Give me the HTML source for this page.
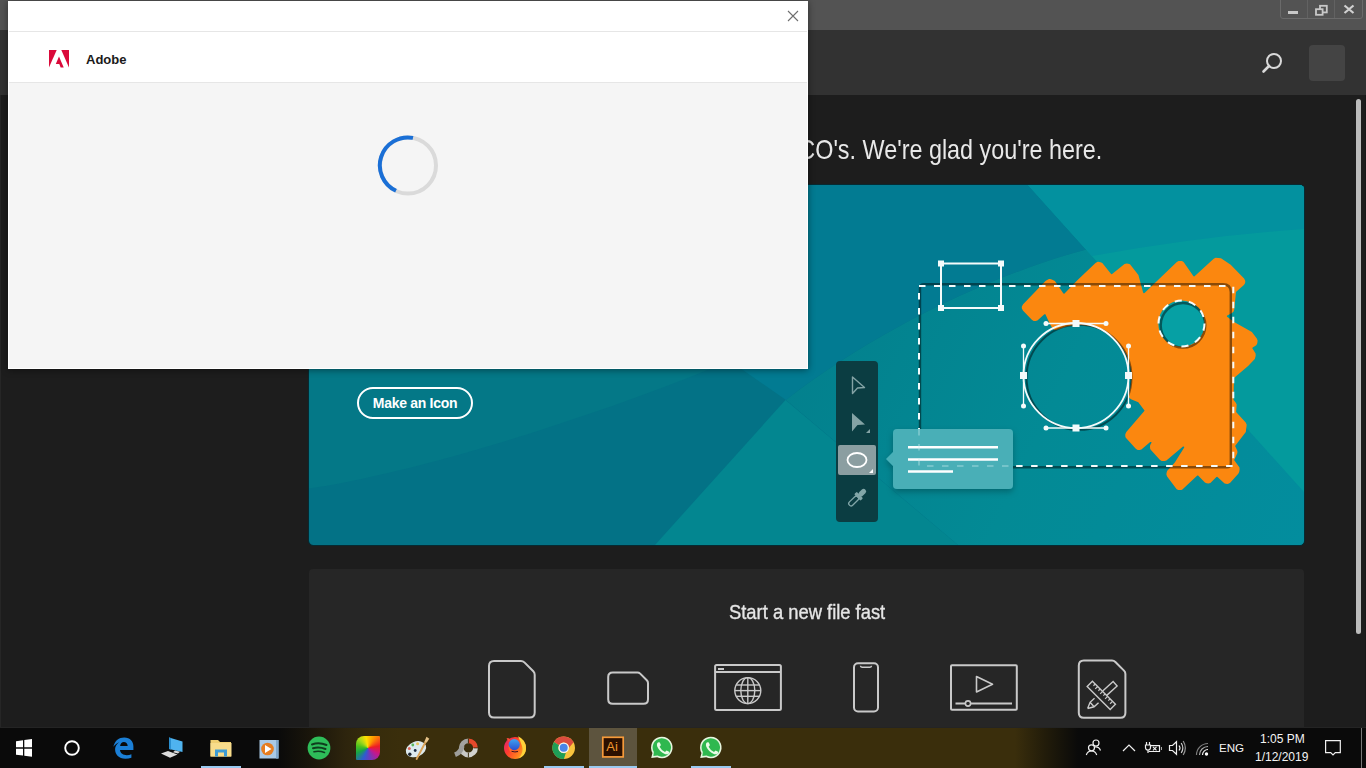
<!DOCTYPE html>
<html><head><meta charset="utf-8">
<style>
*{margin:0;padding:0;box-sizing:border-box}
html,body{width:1366px;height:768px;overflow:hidden;background:#1d1d1d;font-family:"Liberation Sans",sans-serif}
.a{position:absolute}
#titlebar{left:0;top:0;width:1366px;height:30px;background:#535353}
#header{left:0;top:30px;width:1366px;height:65px;background:#323232}
#content{left:0;top:95px;width:1366px;height:633px;background:#1d1d1d;border-left:1px solid #262626;border-right:1px solid #181818}
#welcome{right:264px;top:133.5px;font-size:27.5px;line-height:32px;color:#e8e8e8;white-space:nowrap;transform:scaleX(0.85);transform-origin:right center}
#banner{left:309px;top:185px}
#card{left:309px;top:569px;width:995px;height:159px;background:#262626;border-radius:4px 4px 0 0}
#cardtitle{left:729px;top:600px;font-size:20.2px;line-height:24px;color:#e6e6e6;white-space:nowrap;transform:scaleX(0.91);transform-origin:left center;-webkit-text-stroke:0.35px #e6e6e6}
#scroll{left:1356px;top:99px;width:5px;height:535px;background:#bcbcbc;border-radius:3px}
#taskbar{left:0;top:728px;width:1366px;height:40px;background:linear-gradient(to right,#0a0a0a 0,#0a0a0a 278px,#1c170b 315px,#2d240d 345px,#372c0c 375px,#3a2e0c 400px,#3a2e0c 1015px,#221c0a 1045px,#0a0a0a 1078px)}
#dialog{left:8px;top:1px;width:800px;height:368px;background:#f5f5f5;box-shadow:0 1px 7px rgba(0,0,0,.45)}
#dtop{left:0;top:0;width:800px;height:31px;background:#fff;border-bottom:1px solid #e6e6e6}
#dhead{left:0;top:31px;width:800px;height:51px;background:#fff;border-bottom:1px solid #e6e6e6}
#adobetext{left:78px;top:51px;font-size:13px;font-weight:bold;color:#1a1a1a}
</style></head><body>
<div id="titlebar" class="a"></div>
<svg class="a" style="left:1279px;top:0" width="87" height="21" viewBox="0 0 87 21">
  <path d="M1.5 0 V16 Q1.5 18.5 4 18.5 H81 Q83.5 18.5 83.5 16 V0" fill="none" stroke="#6a6a6a" stroke-width="1"/>
  <line x1="28.5" y1="0" x2="28.5" y2="18" stroke="#626262" stroke-width="1"/>
  <line x1="55.5" y1="0" x2="55.5" y2="18" stroke="#626262" stroke-width="1"/>
  <rect x="9" y="11" width="10" height="3" fill="#c8c8c8"/>
  <rect x="41" y="5.8" width="6.8" height="6.6" fill="none" stroke="#c8c8c8" stroke-width="1.8"/>
  <rect x="37" y="9.2" width="6.6" height="5.6" fill="#535353" stroke="#c8c8c8" stroke-width="1.8"/>
  <path d="M65.5 5.5 L74.5 13 M74.5 5.5 L65.5 13" stroke="#d0d0d0" stroke-width="2.2"/>
</svg>
<div id="header" class="a"></div>
<svg class="a" style="left:1258px;top:48px" width="30" height="30" viewBox="0 0 30 30">
  <circle cx="16" cy="13" r="7" fill="none" stroke="#d9d9d9" stroke-width="2"/>
  <line x1="11" y1="18" x2="5.5" y2="23.5" stroke="#d9d9d9" stroke-width="2.6" stroke-linecap="round"/>
</svg>
<div class="a" style="left:1309px;top:45px;width:36px;height:36px;border-radius:4px;background:#444"></div>
<div id="content" class="a"></div>
<div id="welcome" class="a">Welcome to Adobe Illustrator CO's. We're glad you're here.</div>
<div class="a" style="left:308px;top:184px;width:997px;height:362px;border-radius:5.5px;background:#062a32"></div>
<svg id="banner" class="a" width="995" height="360" viewBox="309 185 995 360">
  <defs>
    <clipPath id="bclip"><rect x="309" y="185" width="995" height="360" rx="4.5"/></clipPath>
    <filter id="sh" x="-20%" y="-20%" width="140%" height="160%"><feDropShadow dx="0" dy="3" stdDeviation="3" flood-color="#000" flood-opacity="0.25"/></filter>
  </defs>
  <g clip-path="url(#bclip)">
    <linearGradient id="gR" x1="786" y1="300" x2="1304" y2="545" gradientUnits="userSpaceOnUse"><stop offset="0" stop-color="#037f8c"/><stop offset="0.5" stop-color="#038a95"/><stop offset="1" stop-color="#038d9e"/></linearGradient>
    <rect x="309" y="185" width="995" height="360" fill="#037286"/>
    <path d="M309,488.5 C400,475 560,430 720,365 L740,340 L740,185 L309,185 Z" fill="#047887"/>
    <path d="M700,340 L786,400 C876,330 1000,270 1100,246 Q1200,236 1304,232 L1304,185 L600,185 Z" fill="#027b92"/>
    <path d="M786,400 C876,330 1000,270 1100,246 Q1200,236 1304,232 L1304,545 L958,545 Z" fill="url(#gR)"/>
    <polygon points="785.5,400 958,545 655,545" fill="#038690"/>
    <path d="M1028,185 L1304,492 L1304,185 Z" fill="#049a9d"/>
    <path d="M1028,185 L1092,256 Q1200,236 1304,229 L1304,185 Z" fill="#03919f"/>
  </g>
  <!-- dark shadow outlines -->

  <!-- orange scribble -->
  <path d="M1021.8,308.2L1022.9,310.5L1031.8,319.7L1033.7,320.9L1035.5,321.0L1037.4,320.5L1044.4,314.2L1045.4,314.2L1049.3,322.7L1052.2,327.9L1052.8,328.8L1054.4,329.8L1056.4,330.0L1066.2,326.6L1073.8,325.3L1081.6,325.1L1089.3,326.0L1094.2,327.3L1099.0,329.0L1106.0,332.5L1112.4,337.0L1116.2,340.4L1119.5,344.1L1122.7,348.4L1126.4,355.0L1129.2,362.2L1130.5,367.3L1131.4,374.9L1131.4,380.1L1130.5,387.7L1128.6,395.1L1128.9,397.1L1129.5,398.0L1131.0,399.2L1138.3,402.3L1144.5,410.4L1144.3,411.1L1126.3,432.1L1125.3,434.2L1125.3,436.3L1125.6,437.4L1135.8,448.7L1137.7,449.9L1139.5,450.0L1141.4,449.5L1150.2,442.1L1151.3,442.1L1151.5,442.8L1150.2,445.0L1150.0,446.3L1150.1,448.4L1150.5,449.4L1159.8,459.7L1161.7,460.9L1164.6,461.0L1166.4,460.5L1183.0,446.6L1183.4,446.4L1184.2,446.7L1184.2,447.6L1174.8,462.5L1167.7,470.3L1167.1,471.1L1166.5,473.2L1166.4,474.4L1167.1,476.5L1176.5,489.1L1178.1,489.9L1179.0,490.0L1181.3,489.9L1182.4,489.5L1197.3,475.4L1198.1,475.6L1204.9,482.4L1206.6,483.3L1208.4,483.5L1210.4,482.9L1216.4,477.0L1217.2,476.7L1224.6,483.5L1227.2,484.0L1228.4,483.8L1230.2,482.7L1238.3,473.8L1239.2,471.9L1239.6,469.8L1239.5,467.6L1234.1,460.0L1237.1,453.8L1237.5,452.0L1237.1,450.2L1235.1,446.0L1245.8,432.0L1246.7,424.7L1245.7,422.6L1236.1,412.0L1236.7,404.6L1235.8,402.7L1233.5,399.7L1234.0,378.4L1234.3,377.8L1248.1,365.9L1254.8,359.0L1255.7,355.7L1255.6,353.6L1252.3,348.3L1252.7,347.6L1256.3,345.2L1257.3,343.2L1257.6,340.6L1256.8,338.6L1251.9,332.0L1234.1,322.0L1226.8,316.5L1227.2,315.4L1232.0,313.0L1233.6,311.6L1234.2,309.8L1236.0,292.3L1236.2,291.8L1243.9,285.0L1244.9,283.5L1245.3,281.9L1245.2,280.7L1244.1,278.6L1230.7,264.8L1221.0,258.2L1215.6,257.7L1213.7,258.7L1194.3,276.6L1193.5,276.2L1183.6,262.0L1181.9,261.1L1178.6,261.0L1176.8,262.0L1144.5,293.1L1143.7,293.2L1143.2,292.7L1138.4,275.1L1130.2,264.5L1129.3,264.0L1126.8,263.6L1124.5,263.9L1111.8,274.3L1111.1,274.0L1102.3,263.0L1100.5,262.2L1098.1,261.8L1097.2,262.0L1095.5,262.9L1077.6,279.9L1064.3,293.7L1063.4,293.4L1054.9,281.1L1051.8,279.4L1050.0,279.0L1049.0,279.1L1046.6,280.2L1045.5,281.0L1022.9,304.6L1021.8,306.7Z" fill="#fb870f"/>
  <!-- small circle hole -->
  <circle cx="1181.5" cy="323.6" r="23.2" fill="#06a0a4"/>
  <!-- dark shadows over orange -->
  <g fill="none" stroke="#000" stroke-opacity="0.45" stroke-width="2.4">
    <path d="M920,467.3 L920,288 Q920,284.2 924,284.2 L1223,284.2 Q1230.8,284.2 1230.8,292 L1230.8,463.5 Q1230.8,467.3 1227,467.3 Z"/>
    <circle cx="1079" cy="377.3" r="52.5" stroke-width="2"/>
    <circle cx="1183" cy="325.3" r="22.3"/>
  </g>
  <!-- white lines -->
  <g fill="none" stroke="#f4fbfb" stroke-width="2">
    <rect x="919" y="286" width="314.3" height="180" stroke-dasharray="6.5 8.5"/>
    <circle cx="1181.5" cy="323.6" r="23" stroke-dasharray="7.2 7.2"/>
    <circle cx="1076" cy="375.5" r="52.5" stroke-width="1.8"/>
    <rect x="941" y="263.5" width="60" height="44.5"/>
    <path d="M1046,323.5 H1106 M1046,428 H1106 M1023.5,346 V406 M1128.5,346 V406" stroke-width="1.3"/>
  </g>
  <g fill="#f4fbfb">
    <rect x="938" y="260.5" width="6" height="6"/><rect x="998" y="260.5" width="6" height="6"/>
    <rect x="938" y="305" width="6" height="6"/><rect x="998" y="305" width="6" height="6"/>
    <rect x="1072.5" y="320" width="7" height="7"/><rect x="1072.5" y="424.5" width="7" height="7"/>
    <rect x="1020" y="372" width="7" height="7"/><rect x="1125" y="372" width="7" height="7"/>
    <circle cx="1046" cy="323.5" r="2.5"/><circle cx="1106" cy="323.5" r="2.5"/>
    <circle cx="1046" cy="428" r="2.5"/><circle cx="1106" cy="428" r="2.5"/>
    <circle cx="1023.5" cy="346" r="2.5"/><circle cx="1023.5" cy="406" r="2.5"/>
    <circle cx="1128.5" cy="346" r="2.5"/><circle cx="1128.5" cy="406" r="2.5"/>
  </g>
  <!-- toolbar -->
  <rect x="836" y="361" width="42" height="161" rx="4" fill="#0b3d42"/>
  <path d="M852.5,377 L864.5,387.5 L857.5,388 L852.5,393.5 Z" fill="none" stroke="#84a3a5" stroke-width="1.4" stroke-linejoin="round"/>
  <path d="M852,413 L865,424.5 L857.5,425 L852,431.5 Z" fill="#84a3a5"/>
  <path d="M866,433 L870,429 L870,433 Z" fill="#84a3a5"/>
  <rect x="838" y="445" width="38" height="30" rx="2" fill="#8b9ea1"/>
  <ellipse cx="857" cy="460" rx="9.5" ry="7" fill="none" stroke="#fff" stroke-width="1.8"/>
  <path d="M869,473 L873,469 L873,473 Z" fill="#fff"/>
  <g transform="rotate(-44 857.3 497.5)"><rect x="846.3" y="495.2" width="12" height="4.6" rx="2.3" fill="none" stroke="#82a6a8" stroke-width="1.3"/><rect x="857.3" y="493" width="3.6" height="9" rx="1" fill="#82a6a8"/><rect x="860" y="495" width="8.6" height="5" rx="2.5" fill="#82a6a8"/></g>
  <!-- callout -->
  <g filter="url(#sh)">
    <rect x="893" y="429" width="120" height="60" rx="4" fill="#48afb7"/>
    <path d="M893,452 L886,459 L893,466 Z" fill="#48afb7"/>
  </g>
  <g stroke="#fff" stroke-width="2.6">
    <line x1="908" y1="447.3" x2="998" y2="447.3"/>
    <line x1="908" y1="459.5" x2="998" y2="459.5"/>
    <line x1="908" y1="471.5" x2="953" y2="471.5"/>
  </g>
  <!-- faint dashed line over callout -->
  <g fill="none" stroke="#c8ecee" stroke-opacity="0.35" stroke-width="2">
    <path d="M919,429 V466 H1013" stroke-dasharray="6.5 8.5"/>
  </g>
</svg>
<div class="a" style="left:357px;top:387px;width:116px;height:32px;border:2px solid #fff;border-radius:16px;color:#fff;font-weight:bold;font-size:14px;text-align:center;line-height:28px;letter-spacing:-0.3px">Make an Icon</div>
<div id="card" class="a"></div>
<div id="cardtitle" class="a">Start a new file fast</div>
<svg class="a" style="left:470px;top:650px" width="680" height="78" viewBox="470 650 680 78">
  <g fill="none" stroke="#c9c9c9" stroke-width="2" stroke-linejoin="round">
    <path d="M494,661 H521 Q523,661 524.4,662.4 L533.3,671.3 Q534.7,672.7 534.7,674.7 V712.5 Q534.7,717.5 529.7,717.5 H494 Q489,717.5 489,712.5 V666 Q489,661 494,661 Z"/>
    <path d="M612.7,672.4 H637.5 Q639,672.4 640.2,673.6 L646.8,680.2 Q648,681.4 648,683 V699.3 Q648,703.8 643.5,703.8 H612.7 Q608.2,703.8 608.2,699.3 V676.9 Q608.2,672.4 612.7,672.4 Z"/>
    <rect x="715.1" y="665.1" width="65.8" height="44.9" rx="1.5"/>
    <line x1="715" y1="672" x2="781" y2="672"/>
    <rect x="854" y="663.2" width="24" height="48.2" rx="4"/>
    <path d="M860.5,665.8 Q860.5,667.2 862,667.2 H870 Q871.5,667.2 871.5,665.8" stroke-width="1.5"/>
    <rect x="951" y="665.2" width="65.8" height="44.5" rx="1"/>
    <path d="M976.5,676.5 L992.5,684.3 L976.5,692 Z" stroke-width="1.6"/>
    <path d="M955.5,703.5 H965 M971,703.5 H1012" stroke-width="2"/>
    <circle cx="968" cy="703.5" r="2.6" stroke-width="1.6"/>
    <path d="M1083.8,660.6 H1112 Q1114,660.6 1115.4,662 L1124,670.6 Q1125.4,672 1125.4,674 V712.8 Q1125.4,717.8 1120.4,717.8 H1083.8 Q1078.8,717.8 1078.8,712.8 V665.6 Q1078.8,660.6 1083.8,660.6 Z"/>
  </g>
  <g fill="none" stroke="#c9c9c9" stroke-width="1.4">
    <circle cx="747.8" cy="690.6" r="13"/>
    <ellipse cx="747.8" cy="690.6" rx="7" ry="13"/>
    <line x1="747.8" y1="677.6" x2="747.8" y2="703.6"/>
    <line x1="734.8" y1="690.6" x2="760.8" y2="690.6"/>
    <line x1="736.3" y1="685" x2="759.3" y2="685"/>
    <line x1="736.3" y1="696.3" x2="759.3" y2="696.3"/>
    <!-- ruler -->
    <g transform="rotate(45 1101.3 695.3)">
      <rect x="1085" y="691.6" width="32.6" height="7.4"/>
      <path d="M1089,691.6 v2.5 M1092.5,691.6 v3.5 M1096,691.6 v2.5 M1099.5,691.6 v3.5 M1103,691.6 v2.5 M1106.5,691.6 v3.5 M1110,691.6 v2.5 M1113.5,691.6 v3.5" stroke-width="1.2"/>
    </g>
    <!-- pencil -->
    <g transform="rotate(-42 1101 696.5)">
      <path d="M1083,696.5 L1089,693.5 H1095 M1083,696.5 L1089,699.5 H1095 M1089,693.5 V699.5 M1106,693.5 H1120 V699.5 H1106"/>
    </g>
  </g>
  <rect x="718" y="668" width="6" height="2" fill="#c9c9c9"/>
</svg>
<div id="scroll" class="a"></div>
<div class="a" style="left:0;top:727px;width:1366px;height:1px;background:#242424"></div>
<div id="taskbar" class="a"></div>
<div class="a" style="left:589px;top:728px;width:48px;height:40px;background:#5d543e"></div>
<div class="a" style="left:201px;top:766px;width:40px;height:2px;background:#99c9f0"></div>
<div class="a" style="left:544px;top:766px;width:40px;height:2px;background:#99c9f0"></div>
<div class="a" style="left:589px;top:766px;width:48px;height:2px;background:#99c9f0"></div>
<div class="a" style="left:691px;top:766px;width:40px;height:2px;background:#99c9f0"></div>
<svg class="a" style="left:0;top:728px" width="1366" height="40" viewBox="0 728 1366 40">
  <!-- windows -->
  <g fill="#fff">
    <polygon points="16,741.2 23,740.2 23,747.3 16,747.3"/>
    <polygon points="24.3,740 32,739 32,747.3 24.3,747.3"/>
    <polygon points="16,748.7 23,748.7 23,755.6 16,754.8"/>
    <polygon points="24.3,748.7 32,748.7 32,756.8 24.3,755.8"/>
  </g>
  <circle cx="72" cy="748" r="6.8" fill="none" stroke="#fff" stroke-width="1.9"/>
  <!-- edge -->
  <path fill-rule="evenodd" d="M113.3,746.8 C114.8,740.3 119,737.4 124.2,737.4 C130.3,737.4 133.4,741.6 133.4,746.2 V750 H120 C120.4,753.4 123.3,755.2 126.8,755.2 C128.4,755.2 130,754.9 131.4,754.2 V757.8 C129.6,758.5 127.6,758.8 125.4,758.8 C118.8,758.8 115.1,754.6 115.1,749.6 C115.1,745.9 117.4,742.9 120.6,741.5 C117.6,742.5 114.9,744.5 113.3,746.8 Z M120.1,746 H127.7 C127.5,743.5 125.9,742.1 123.9,742.1 C121.9,742.1 120.5,743.7 120.1,746 Z" fill="#1b7fd6"/>
  <!-- computer -->
  <polygon points="169,737.5 182.5,741.5 182.5,752 169,749" fill="#4fb3ef"/>
  <polygon points="169,737.5 171,738 171,749.5 169,749" fill="#2a8fd0"/>
  <polygon points="175,750.5 180,751.8 178,753.5 173,752.2" fill="#d8d8d8"/>
  <polygon points="161,753.5 168,751 177.5,754.5 170,757.8" fill="#dcdcdc"/>
  <!-- folder -->
  <path d="M210.5,740 H218 L220,742 H231 V756.5 H210.5 Z" fill="#f0cf72"/>
  <rect x="210.5" y="743" width="21" height="13.5" fill="#f8dc8b"/>
  <path d="M215,756.5 V749.5 H227 V756.5 H224 V752.5 H218 V756.5 Z" fill="#3d9bd4"/>
  <!-- media player -->
  <rect x="259.5" y="740" width="19" height="18.5" fill="#a9c9e6"/>
  <rect x="276" y="740" width="2.5" height="18.5" fill="#7fa7cc"/>
  <circle cx="267.5" cy="749" r="6.3" fill="#e67d21"/>
  <polygon points="265,745 271.5,749 265,753" fill="#fff"/>
  <!-- spotify -->
  <circle cx="319" cy="748" r="11.4" fill="#2ebd59"/>
  <g fill="none" stroke="#0f3d1e" stroke-width="2" stroke-linecap="round">
    <path d="M312,744.5 Q319,742 326.5,745"/>
    <path d="M313,748.3 Q319,746.5 325.5,749"/>
    <path d="M314,751.8 Q319,750.5 324.5,752.5" stroke-width="1.6"/>
  </g>
  <!-- color leaf -->
  <defs>
    <clipPath id="leaf"><path d="M356,744 Q356,736 364,736 H379.5 V752 Q379.5,760 371.5,760 H356 Z"/></clipPath>
    <clipPath id="ffclip"><circle cx="515" cy="748" r="11.3"/></clipPath>
  </defs>

  <!-- palette -->
  <ellipse cx="416" cy="749.2" rx="10.6" ry="7.6" transform="rotate(-22 416 749.2)" fill="#dce9ee"/>
  <circle cx="409.8" cy="754.3" r="1.7" fill="#1c2430"/>
  <circle cx="409.3" cy="748.6" r="1.5" fill="#d9675c"/>
  <circle cx="412.8" cy="745" r="1.4" fill="#5cb85c"/>
  <circle cx="417.6" cy="743.8" r="1.5" fill="#e8c25a"/>
  <circle cx="415.2" cy="750.5" r="1.4" fill="#1b2c44"/>
  <path d="M416.6,759 L425.8,741.5" stroke="#d9a45a" stroke-width="1.9" stroke-linecap="round"/>
  <path d="M424.3,741.8 L426.5,736.8 L429.3,738.8 L426.8,742.6 Z" fill="#e6c389"/>
  <!-- photoscape-like -->
  <g fill="none" stroke-width="4.8">
    <path d="M468.4,755 A7.1,7.1 0 0 1 461.3,747.9" stroke="#c9c9c6"/>
    <path d="M475.5,747.9 A7.1,7.1 0 0 1 468.4,755" stroke="#d2d2cf"/>
    <path d="M461.3,747.9 A7.1,7.1 0 0 1 468.4,740.8" stroke="#a3a3a0"/>
    <path d="M462.2,746 Q461,752.5 455,754.8" stroke="#9d9d9a"/>
    <path d="M468.4,740.8 A7.1,7.1 0 0 1 475.5,747.9" stroke="#e6492b"/>
  </g>
  <path d="M468.4,738.5 V743 M468.4,752.8 V757.5 M473.5,747.9 H478" stroke="#3a2e0c" stroke-width="0.9"/>
  <!-- firefox -->
  <defs><linearGradient id="ffg" x1="0" y1="0.2" x2="1" y2="0.8"><stop offset="0" stop-color="#e5246a"/><stop offset="0.35" stop-color="#ff3d2e"/><stop offset="0.7" stop-color="#ff7a1f"/><stop offset="1" stop-color="#ffb62a"/></linearGradient>
  <linearGradient id="ffb" x1="0" y1="0" x2="0" y2="1"><stop offset="0" stop-color="#3fa3f0"/><stop offset="1" stop-color="#2a4fd0"/></linearGradient></defs>
  <circle cx="515" cy="748" r="11" fill="url(#ffg)"/>
  <circle cx="514.2" cy="744.6" r="5.6" fill="url(#ffb)"/>
  <path d="M518,736.3 Q526.5,740 526,749 Q525.5,756 519,758.2 Q524,752 522,746 Q520.5,741.5 518,736.3 Z" fill="#ffd33a"/>
  <path d="M506.5,738.5 Q508.5,737 510,739.5 L509,742 Z" fill="#ff4a3a"/>
  <path d="M508.5,745 Q510,750 515,751 Q518.5,751.3 520.5,749 Q519,753.5 513.5,753 Q508,752 508.5,745 Z" fill="#ff6a2a"/>
  <path d="M511.5,751.3 Q515,752.5 518,751.5" fill="none" stroke="#3a1020" stroke-width="1"/>
  <!-- chrome -->
  <circle cx="563.7" cy="747.8" r="11.3" fill="#f9c43e"/>
  <path d="M554,741.98 A11.3,11.3 0 0 1 573.58,742.32 L569,747.8 A5.3,5.3 0 0 0 559.11,745.15 Z" fill="#dc4c3e"/>
  <path d="M563.9,759.1 A11.3,11.3 0 0 1 554,741.98 L559.11,745.15 A5.3,5.3 0 0 0 565.86,752.64 Z" fill="#1e9e57"/>
  <circle cx="563.7" cy="747.8" r="5.3" fill="#f4f4f4"/>
  <circle cx="563.7" cy="747.8" r="4" fill="#4a86e8"/>
  <!-- Ai -->
  <rect x="602.8" y="737.3" width="20.4" height="19.6" fill="#2b1000" stroke="#f59a3a" stroke-width="1.7"/>
  <text x="606.3" y="751.3" font-family="Liberation Sans" font-size="13" fill="#f0982e">Ai</text>
  <!-- whatsapp -->
  <g id="wa">
    <path d="M651.2,757.9 L652.45,752.9 A10.8,10.8 0 1 1 657.24,757.29 Z" fill="#e6f5df"/>
    <path d="M653.4,756 L653.83,752.1 A9.2,9.2 0 1 1 657.48,755.62 Z" fill="#2fb84f"/>
    <path d="M657.2,743.2 Q658.2,741.6 659.8,742.4 L660.9,745.1 Q660.4,746.2 659.6,746.7 Q661.4,750.4 665,751.9 Q665.7,750.9 666.6,750.4 L669.1,751.7 Q669.6,753.3 668.1,754.1 Q665.1,755.2 660.3,750.9 Q655.9,746.3 657.2,743.2 Z" fill="#e9fbe6"/>
  </g>
  <use href="#wa" x="49"/>
  <!-- tray -->
  <g fill="none" stroke="#f0f0f0" stroke-width="1.2">
    <circle cx="1091.5" cy="747.8" r="3"/>
    <path d="M1086.3,755 Q1087.5,751 1091.5,751 Q1095.5,751 1096.7,755"/>
    <circle cx="1096" cy="743" r="3"/>
    <path d="M1095,747 Q1099,746.5 1100.5,750.5"/>
    <path d="M1123,751 L1129,745 L1135,751"/>
    <path d="M1146.5,742 V745 M1149.5,742 V745 M1145.5,745 H1150.5 V747.5 Q1150.5,750 1148,750 Q1145.5,750 1145.5,747.5 Z M1148,750 V753"/>
    <path d="M1150.5,745.7 H1159.5 V751.5 H1148.5"/>
    <path d="M1153,746.8 L1156.5,750.3 M1156.5,746.8 L1153,750.3"/>
    <path d="M1169.5,745.5 H1172.5 L1176.5,741.7 V754.3 L1172.5,750.5 H1169.5 Z"/>
    <path d="M1179,745.5 Q1181,748 1179,750.5"/>
    <path d="M1181.2,743 Q1184.5,748 1181.2,753" stroke-opacity="0.85"/>
    <path d="M1183.2,741 Q1187.5,748 1183.2,755" stroke-opacity="0.6"/>
    <path d="M1196.5,755 A11.5,11.5 0 0 1 1208,743.5" stroke-opacity="0.5"/>
    <path d="M1199.5,755 A8.5,8.5 0 0 1 1208,746.5" stroke-opacity="0.7"/>
    <path d="M1202.5,755 A5.5,5.5 0 0 1 1208,749.5"/>
  </g>
  <path d="M1161,747 H1162 V750 H1161 Z" fill="#aaa"/>
  <circle cx="1206.5" cy="754" r="1.7" fill="#fff"/>
  <path d="M1325.6,740.6 H1340.3 V752.6 H1335.3 L1333,755 L1330.7,752.6 H1325.6 Z" fill="none" stroke="#f0f0f0" stroke-width="1.2"/>
  <line x1="1361.5" y1="728" x2="1361.5" y2="768" stroke="#777" stroke-width="1"/>
</svg>
<div id="dialog" class="a">
  <div id="dtop" class="a"></div>
  <div id="dhead" class="a"></div>
  <svg class="a" style="left:779px;top:9px" width="12" height="12" viewBox="0 0 12 12"><path d="M1 1 L11 11 M11 1 L1 11" stroke="#6e6e6e" stroke-width="1.1"/></svg>
  <svg class="a" style="left:41px;top:49px" width="20" height="17.5" viewBox="0 0 30 26"><polygon fill="#da0a3a" points="11.5,0 0,0 0,26"/><polygon fill="#da0a3a" points="18.5,0 30,0 30,26"/><polygon fill="#da0a3a" points="15,9.6 22.1,26 17.5,26 15.4,20.8 10.2,20.8"/></svg>
  <div id="adobetext" class="a">Adobe</div>
  <svg class="a" style="left:368px;top:131px" width="64" height="68" viewBox="0 0 64 68">
    <circle cx="32" cy="33.5" r="28" fill="none" stroke="#dadada" stroke-width="4"/>
    <path d="M37 5.9 A28 28 0 0 0 20 58.8" fill="none" stroke="#1a6fd6" stroke-width="4"/>
  </svg>
  <div class="a" style="left:0;top:0;width:800px;height:368px;border:1px solid #fff"></div>
</div>
<div class="a" style="left:356px;top:736px;width:23.5px;height:24px;border-radius:8px 1px 8px 1px;background:conic-gradient(from -10deg,#ffe000 0deg,#ff9500 40deg,#ee1c25 90deg,#c2188f 135deg,#6b3bbd 180deg,#2e5bd1 215deg,#16a34a 255deg,#4cc21d 290deg,#a6d81a 325deg,#ffe000 360deg)"></div>
<div class="a" style="left:1219px;top:740.5px;font-size:11.6px;color:#f4f4f4">ENG</div>
<div class="a" style="left:1260px;top:732px;font-size:12px;color:#f4f4f4">1:05 PM</div>
<div class="a" style="left:1255px;top:750px;font-size:12px;color:#f4f4f4">1/12/2019</div>
</body></html>
